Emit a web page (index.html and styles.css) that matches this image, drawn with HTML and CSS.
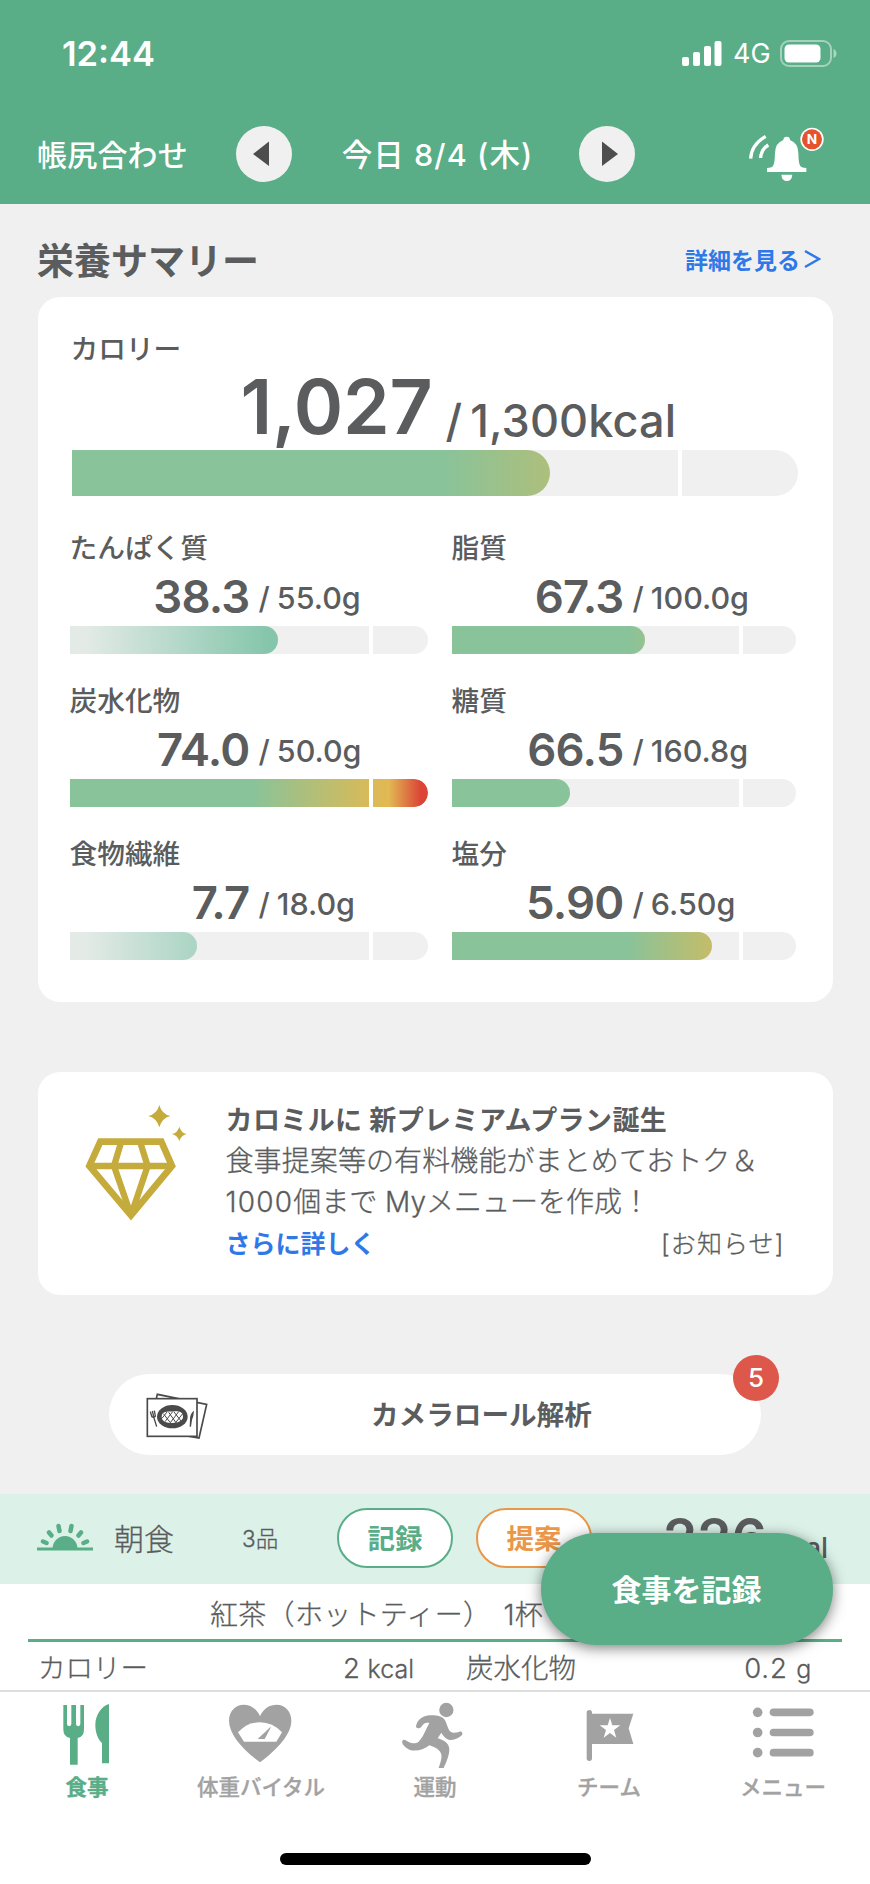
FILE: index.html
```
<!DOCTYPE html>
<html lang="ja">
<head>
    <meta charset="UTF-8">
    <meta name="viewport" content="width=device-width, initial-scale=1.0">
    <title>食事</title>
    <link rel="stylesheet" href="styles.css">
</head>
<body>
    <!-- ヘッダー -->
    <header class="header">
        <div class="status-bar">
            <span class="clock">12:44</span>
            <svg class="signal" viewBox="0 0 40 25" fill="#fff">
                <rect x="0" y="16" width="7" height="9" rx="2"/>
                <rect x="11" y="11" width="7" height="14" rx="2"/>
                <rect x="22" y="5" width="7" height="20" rx="2"/>
                <rect x="32.5" y="0" width="7" height="25" rx="2"/>
            </svg>
            <span class="network">4G</span>
            <svg class="battery" viewBox="0 0 57 27">
                <rect x="1" y="1" width="50" height="25" rx="8" fill="none" stroke="#fff" stroke-opacity=".45" stroke-width="2"/>
                <rect x="4.500" y="4.500" width="36" height="18" rx="4.500" fill="#fff"/>
                <path d="M53.500 9q3 1.500 3 4.500t-3 4.500z" fill="#fff" fill-opacity=".5"/>
            </svg>
        </div>
        <nav class="date-nav">
            <span class="adjust">帳尻合わせ</span>
            <button class="arrow" aria-label="前の日"><svg viewBox="0 0 56 56"><path d="M17 28L33 15.500V40z" fill="#4d4d4d"/></svg></button>
            <span class="today">今日 8/4 (木)</span>
            <button class="arrow" aria-label="次の日"><svg viewBox="0 0 56 56"><path d="M39 28L23 15.500V40z" fill="#4d4d4d"/></svg></button>
            <svg class="bell" viewBox="54 42 231 168">
                <path d="M62 140Q64 98 107 73M92 138Q93 112 115 99" fill="none" stroke="#fff" stroke-width="10"/>
                <path d="M170 74q10 0 10 10q24 9 25 38c1 22 1 34 8 42q2 2 16 4v12H111v-12q14-2 16-4c7-8 7-20 8-42q1-29 25-38q0-10 10-10z" fill="#fff"/>
                <path d="M154 188h33q-2 19-16.500 19T154 188z" fill="#fff"/>
                <circle cx="246" cy="82" r="35" fill="#fff"/>
                <circle cx="246" cy="82" r="30" fill="#e4532e"/>
                <text x="246" y="97" class="bell-text">N</text>
            </svg>
        </nav>
    </header>

    <main class="content">
        <div class="section-title">
            <h1>栄養サマリー</h1>
            <a class="more">詳細を見る<svg viewBox="0 0 18 22"><path d="M2 3l14 8L2 19" fill="none" stroke="#2f78e8" stroke-width="2.500"/></svg></a>
        </div>

        <!-- 栄養サマリー -->
        <section class="card summary">
            <h2 class="label">カロリー</h2>
            <div class="calorie-value">
                <span class="amount">1,027</span>
                <span class="target"><i>/</i>1,300kcal</span>
            </div>
            <div class="bar bar-large"><div class="fill" style="width: 478px"></div></div>

            <div class="nutrients">
                <div class="nutrient">
                    <h2 class="label">たんぱく質</h2>
                    <div class="value"><span class="amount">38.3</span><span class="target"><i>/</i>55.0g</span></div>
                    <div class="bar"><div class="fill fill-pale" style="width: 208px"></div></div>
                </div>
                <div class="nutrient">
                    <h2 class="label">脂質</h2>
                    <div class="value"><span class="amount">67.3</span><span class="target"><i>/</i>100.0g</span></div>
                    <div class="bar"><div class="fill" style="width: 193px"></div></div>
                </div>
                <div class="nutrient">
                    <h2 class="label">炭水化物</h2>
                    <div class="value"><span class="amount">74.0</span><span class="target"><i>/</i>50.0g</span></div>
                    <div class="bar"><div class="fill" style="width: 358px"></div></div>
                </div>
                <div class="nutrient">
                    <h2 class="label">糖質</h2>
                    <div class="value"><span class="amount">66.5</span><span class="target"><i>/</i>160.8g</span></div>
                    <div class="bar"><div class="fill" style="width: 118px"></div></div>
                </div>
                <div class="nutrient">
                    <h2 class="label">食物繊維</h2>
                    <div class="value"><span class="amount">7.7</span><span class="target"><i>/</i>18.0g</span></div>
                    <div class="bar"><div class="fill fill-pale" style="width: 127px"></div></div>
                </div>
                <div class="nutrient">
                    <h2 class="label">塩分</h2>
                    <div class="value"><span class="amount">5.90</span><span class="target"><i>/</i>6.50g</span></div>
                    <div class="bar"><div class="fill" style="width: 260px"></div></div>
                </div>
            </div>
        </section>

        <!-- お知らせ -->
        <section class="card news">
            <svg class="diamond" viewBox="0 0 360 405">
                <g fill="none" stroke="#c5ab3c" stroke-width="20">
                    <path d="M76 140H259L291 213L168 361L43 213Z"/>
                    <path d="M43 213H291"/>
                    <path d="M139 140L117 213L168 361L218 213L195 140" stroke-width="19" stroke-linejoin="bevel"/>
                </g>
                <path d="M253 30Q260 57 286 63Q260 70 253 97Q246 70 220 63Q246 57 253 30Z" fill="#c5ab3c"/>
                <path d="M313 95Q318 113 335 117Q318 121 313 139Q308 121 291 117Q308 113 313 95Z" fill="#c5ab3c"/>
            </svg>
            <div class="news-text">
                <h2>カロミルに 新プレミアムプラン誕生</h2>
                <p class="line-one">食事提案等の有料機能がまとめておトク＆</p>
                <p class="line-two"><span>1000</span>個まで Myメニューを作成！</p>
                <div class="news-footer">
                    <a>さらに詳しく</a>
                    <span>[お知らせ]</span>
                </div>
            </div>
        </section>

        <!-- カメラロール -->
        <button class="camera-roll">
            <svg viewBox="0 0 252 198">
                <g fill="none" stroke="#4a4a4a" stroke-width="5">
                    <path d="M64 50L67 37L215 67L192 168L155 162"/>
                    <rect x="37" y="50" width="149" height="113" fill="#fff"/>
                </g>
                <ellipse cx="112" cy="104" rx="46" ry="35" fill="#4a4a4a"/>
                <path d="M80 104C80 84 105 90 120 88C136 87 145 93 144 106C142 118 128 123 112 123C94 123 80 118 80 104Z" fill="#fff"/>
                <path d="M85 95L106 122M101 91L123 122M117 90L138 117M81 109L96 90M90 119L113 89M106 122L131 89M122 122L143 95" stroke="#4a4a4a" stroke-width="3"/>
                <path d="M46 89L51 105M52 87L56 103M58 86L61 102M50 104Q57 108 62 102M56 105L65 134" fill="none" stroke="#4a4a4a" stroke-width="4"/>
                <path d="M177 86Q165 94 165 112L164 134H168L171 114Q176 103 177 86Z" fill="#4a4a4a"/>
            </svg>
            <span>カメラロール解析</span>
            <b class="badge">5</b>
        </button>

        <!-- 朝食 -->
        <section class="meal">
            <div class="meal-header">
                <svg class="sun" viewBox="0 0 56 28">
                    <path d="M0 26H56" stroke="#59ad87" stroke-width="3"/>
                    <path d="M15.500 26a12.500 13 0 0 1 25 0z" fill="#59ad87"/>
                    <path d="M6 18.500L9.500 20M12 9.500L14.500 12.500M21.500 3L22.500 8M34.500 3L33.500 8M44 9.500L41.500 12.500M50 18.500L46.500 20" stroke="#59ad87" stroke-width="4.500" stroke-linecap="round"/>
                </svg>
                <span class="meal-name">朝食</span>
                <span class="meal-count">3品</span>
                <button class="pill">記録</button>
                <button class="pill pill-orange">提案</button>
                <span class="meal-total">226</span>
                <span class="meal-unit">kcal</span>
            </div>
            <div class="food">紅茶（ホットティー） 1杯</div>
            <div class="food-detail">
                <span class="detail-name">カロリー</span>
                <span class="detail-value">2 <small>kcal</small></span>
                <span class="detail-name">炭水化物</span>
                <span class="detail-value">0.2 <small>g</small></span>
            </div>
        </section>
        <button class="record-button">食事を記録</button>
    </main>

    <!-- タブバー -->
    <footer class="tab-bar">
        <div class="tabs">
            <a class="tab active">
                <svg viewBox="0 0 210 204"><path d="M34 12H45V69a6.500 6.500 0 0 0 13 0V12H72V69a6.500 6.500 0 0 0 13 0V12H96V85Q96 108 77 111V191H54V111Q34 108 34 85ZM171 9V187H150V126C138 115 130 95 130 72C130 40 150 15 171 9Z"/></svg>
                <span>食事</span>
            </a>
            <a class="tab">
                <svg viewBox="0 0 210 204">
                    <path d="M102 46C92 22 72 11 53 11C27 11 9 32 9 59C9 100 50 145 102 184C154 145 196 100 196 59C196 32 178 11 152 11C132 11 112 22 102 46Z"/>
                    <path d="M36 94Q64 64 102 64T168 94L151 122H54Z" fill="#fff"/>
                    <path d="M131 80L133 77L134 80L116 114H95Z"/>
                </svg>
                <span>体重バイタル</span>
            </a>
            <a class="tab">
                <svg viewBox="0 0 210 204">
                    <circle cx="139" cy="27" r="21.500"/>
                    <path d="M48 76C50 62 64 44 88 43C108 42 125 44 134 56C140 65 142 80 149 90C157 98 167 95 177 93C184 88 190 97 186 102C175 113 160 119 146 116C136 112 128 102 124 95L113 112C125 115 148 125 148 145C148 165 138 185 131 201H116C122 183 128 165 122 155C116 143 100 137 88 133C70 148 45 152 28 146C15 140 4 128 7 120C10 112 18 118 26 123C36 128 48 128 56 122C70 108 76 88 88 66C76 62 68 70 64 78C58 84 48 83 48 76Z"/>
                </svg>
                <span>運動</span>
            </a>
            <a class="tab">
                <svg viewBox="0 0 210 204">
                    <rect x="38" y="27" width="16" height="153" rx="8"/>
                    <path d="M54 38H178L164 82L178 129H54Z"/>
                    <path d="M108 51L115 73H139L120 87L127 110L108 96L89 110L96 87L77 73H101Z" fill="#fff"/>
                </svg>
                <span>チーム</span>
            </a>
            <a class="tab">
                <svg viewBox="0 0 210 204">
                    <circle cx="29" cy="34" r="14.500"/><rect x="65" y="22.500" width="132" height="23" rx="11.500"/>
                    <circle cx="29" cy="94.500" r="14.500"/><rect x="65" y="83" width="132" height="23" rx="11.500"/>
                    <circle cx="29" cy="155" r="14.500"/><rect x="65" y="143.500" width="132" height="23" rx="11.500"/>
                </svg>
                <span>メニュー</span>
            </a>
        </div>
        <div class="home-indicator"></div>
    </footer>
</body>
</html>
```
FILE: styles.css
```
* {
    box-sizing: border-box;
}

body {
    width: 870px;
    height: 1884px;
    margin: 0;
    display: flex;
    flex-direction: column;
    overflow: hidden;
    font-family: "Inter", "Noto Sans CJK JP", sans-serif;
    background-color: #f0f0f0;
    color: #5a5c5d;
}

h1, h2, p {
    margin: 0;
}

button {
    padding: 0;
    border: none;
    font-family: inherit;
    color: inherit;
}

svg {
    display: block;
    flex-shrink: 0;
}

/* ヘッダー */
.header {
    height: 204px;
    flex-shrink: 0;
    background: #59ad87;
    color: #fff;
}

.status-bar {
    display: flex;
    align-items: center;
    height: 107px;
    padding: 0 33px 0 62px;
}

.clock {
    font-size: 34.5px;
    font-weight: 600;
    letter-spacing: 0;
    margin-right: auto;
}

.signal {
    width: 40px;
    height: 25px;
}

.network {
    width: 58px;
    padding-left: 11px;
    font-size: 27px;
}

.battery {
    width: 57px;
    height: 27px;
}

.date-nav {
    display: flex;
    align-items: center;
    height: 93px;
    padding-left: 37px;
    font-size: 30px;
    font-weight: 500;
    white-space: nowrap;
}

.adjust {
    width: 199px;
    padding-bottom: 2px;
    letter-spacing: 0.2px;
}

.arrow {
    width: 56px;
    height: 56px;
    border-radius: 50%;
    background: #f0f0f0;
}

.arrow svg {
    width: 56px;
    height: 56px;
}

.today {
    width: 287px;
    padding: 0 0 2px 4px;
    text-align: center;
    font-size: 30.500px;
    letter-spacing: 1.1px;
}

.bell {
    width: 77px;
    height: 56px;
    margin-left: 113px;
}

.bell-text {
    font-size: 41px;
    font-weight: 700;
    fill: #fff;
    text-anchor: middle;
}

/* コンテンツ */
.content {
    position: relative;
    flex: 1;
    min-height: 0;
    overflow: hidden;
}

.section-title {
    display: flex;
    justify-content: space-between;
    align-items: center;
    height: 93px;
    padding: 16px 49px 0 37px;
}

.section-title h1 {
    font-size: 37px;
    font-weight: 700;
}

.more {
    display: flex;
    align-items: center;
    font-size: 23px;
    font-weight: 700;
    color: #2f78e8;
}

.more svg {
    width: 18px;
    height: 22px;
    margin-left: 3px;
}

.card {
    margin: 0 37.5px;
    background: #fff;
    border-radius: 22px;
}

.label {
    height: 40px;
    font-size: 27.700px;
    line-height: 40px;
    font-weight: 500;
}

/* 栄養サマリー */
.summary {
    height: 705px;
    padding: 32px 34px 0 34px;
}

.summary > .label {
    margin-left: -1px;
}

.calorie-value {
    display: flex;
    height: 81px;
    font-weight: 600;
    white-space: nowrap;
}

.calorie-value .amount {
    width: 361px;
    text-align: right;
    font-size: 75px;
    line-height: 75px;
    letter-spacing: -0.2px;
}

.calorie-value .target {
    margin-left: 13px;
    font-size: 45px;
    line-height: 104px;
    font-weight: 500;
    letter-spacing: 0.1px;
}

.calorie-value .target i {
    font-style: normal;
    margin-right: 8px;
}

.bar {
    position: relative;
    height: 27.500px;
    background: #f0f0f0;
    border-radius: 0 14px 14px 0;
    overflow: hidden;
}

.bar::after {
    content: "";
    position: absolute;
    top: 0;
    left: 83.6%;
    width: 4px;
    height: 100%;
    background: #fff;
}

.bar-large {
    width: 726px;
    height: 46px;
    border-radius: 0 23px 23px 0;
}

.fill {
    height: 100%;
    border-radius: 0 14px 14px 0;
    background: linear-gradient(90deg, #89c39a 51%, #d9ba58 84%, #e2b953 89%, #db4536 98%) 0 0 / 358px 100% no-repeat;
}

.nutrient:nth-child(even) .fill {
    background-size: 344px 100%;
}

.nutrient .fill-pale {
    background-image: linear-gradient(90deg, #e4ebe7 4%, #84c5ab 56%);
}

.bar-large .fill {
    border-radius: 0 23px 23px 0;
    background-size: 726px 100%;
}

.nutrients {
    display: grid;
    grid-template-columns: 358px 344px;
    column-gap: 24px;
    row-gap: 27.500px;
    margin: 32px 0 0 -2px;
}

.nutrient .value {
    display: flex;
    height: 58px;
    white-space: nowrap;
}

.nutrient .amount {
    width: 180px;
    text-align: right;
    font-size: 45.500px;
    line-height: 57px;
    font-weight: 600;
    letter-spacing: -0.8px;
}

.nutrient:nth-child(even) .amount {
    width: 172px;
}

.nutrient .target {
    margin-left: 9px;
    font-size: 30.500px;
    line-height: 60px;
    font-weight: 500;
}

.nutrient .target i {
    font-style: normal;
    margin-right: 7px;
}

/* お知らせ */
.news {
    display: flex;
    height: 223px;
    margin-top: 70px;
}

.diamond {
    width: 120px;
    height: 135px;
    margin: 23px 0 0 37px;
}

.news-text {
    width: 559px;
    margin-left: 31px;
    padding-top: 29px;
    font-size: 28px;
    line-height: 40.500px;
    font-weight: 300;
    white-space: nowrap;
    -webkit-text-stroke: 0.3px;
}

.news-text h2 {
    font-size: 27px;
    line-height: 40px;
    font-weight: 700;
    letter-spacing: 0.4px;
    -webkit-text-stroke: 0;
}

.line-one {
    letter-spacing: 0.1px;
}

.line-two span {
    letter-spacing: 1.2px;
}

.news-footer {
    display: flex;
    justify-content: space-between;
    font-size: 25px;
    line-height: 44px;
}

.news-footer a {
    color: #2f78e8;
    font-weight: 700;
    -webkit-text-stroke: 0;
}

.news-footer span {
    letter-spacing: 1.1px;
}

/* カメラロール */
.camera-roll {
    position: relative;
    display: flex;
    align-items: center;
    width: 652px;
    height: 81px;
    margin: 79px 0 0 109px;
    background: #fff;
    border-radius: 41px;
    font-size: 27.600px;
    font-weight: 700;
}

.camera-roll svg {
    width: 84px;
    height: 66px;
    margin-left: 26px;
}

.camera-roll span {
    margin-left: 152px;
    padding-bottom: 3px;
}

.badge {
    position: absolute;
    top: -19px;
    right: -18px;
    width: 46px;
    height: 46px;
    border-radius: 50%;
    background: #dd574a;
    color: #fff;
    font-size: 26px;
    line-height: 46px;
    font-weight: 500;
    text-align: center;
}

/* 食事の記録 */
.meal {
    margin-top: 39px;
    background: #fff;
}

.meal-header {
    display: flex;
    align-items: center;
    height: 90px;
    padding: 0 0 2px 37px;
    background: #dcf2e9;
}

.sun {
    width: 56px;
    height: 28px;
    margin-top: -3px;
}

.meal-name {
    width: 128px;
    margin: -3px 0 0 21px;
    font-size: 30px;
    font-weight: 300;
    -webkit-text-stroke: 0.3px;
}

.meal-count {
    width: 95px;
    margin-top: -3px;
    font-size: 22.500px;
    font-weight: 300;
    -webkit-text-stroke: 0.3px;
}

.pill {
    width: 116px;
    height: 60px;
    margin-right: 23px;
    padding-bottom: 2px;
    border: 2.500px solid #59ad87;
    border-radius: 30px;
    background: #fff;
    color: #59ad87;
    font-size: 27.500px;
    font-weight: 700;
}

.pill-orange {
    border-color: #ea9749;
    color: #ea9749;
}

.meal-total {
    margin-left: 48px;
    font-size: 55px;
    font-weight: 600;
}

.meal-unit {
    margin: 20px 0 0 7px;
    font-size: 28px;
    font-weight: 500;
}

.food {
    height: 58px;
    margin: 0 28px;
    padding-left: 182px;
    border-bottom: 3px solid #59ad87;
    font-size: 28px;
    line-height: 63px;
    font-weight: 300;
    letter-spacing: 0.3px;
    word-spacing: 4px;
    white-space: nowrap;
    -webkit-text-stroke: 0.3px;
}

.food-detail {
    display: grid;
    grid-template-columns: 180px 196px 180px 218px;
    height: 60px;
    padding-left: 38px;
    font-size: 27.500px;
    line-height: 52px;
    font-weight: 300;
    -webkit-text-stroke: 0.3px;
}

.food-detail .detail-value {
    text-align: right;
}

.food-detail .detail-value:nth-child(4) {
    letter-spacing: 0.8px;
}

.food-detail .detail-name:nth-child(3) {
    padding-left: 52px;
    white-space: nowrap;
}

.food-detail small {
    font-size: 25px;
}

.record-button {
    position: absolute;
    right: 37.500px;
    bottom: 45px;
    width: 292px;
    height: 112px;
    padding-bottom: 3px;
    border-radius: 56px;
    background: #59ad87;
    box-shadow: 0 3px 14px rgba(0, 0, 0, 0.5);
    color: #fff;
    font-size: 30px;
    font-weight: 700;
}

/* タブバー */
.tab-bar {
    height: 194px;
    flex-shrink: 0;
    background: #fff;
    border-top: 2px solid #dedede;
}

.tabs {
    display: flex;
    height: 161px;
    padding-top: 9px;
}

.tab {
    display: flex;
    flex-direction: column;
    align-items: center;
    width: 174px;
    color: #a2a2a2;
    fill: #a2a2a2;
    font-size: 21.500px;
    line-height: 36px;
    font-weight: 500;
    -webkit-text-stroke: 0.3px;
}

.tab.active {
    color: #59ad87;
    fill: #59ad87;
    font-weight: 700;
}

.tab svg {
    width: 70px;
    height: 68px;
}

.home-indicator {
    width: 311px;
    height: 12px;
    margin: 0 auto;
    border-radius: 6px;
    background: #000;
}
```
